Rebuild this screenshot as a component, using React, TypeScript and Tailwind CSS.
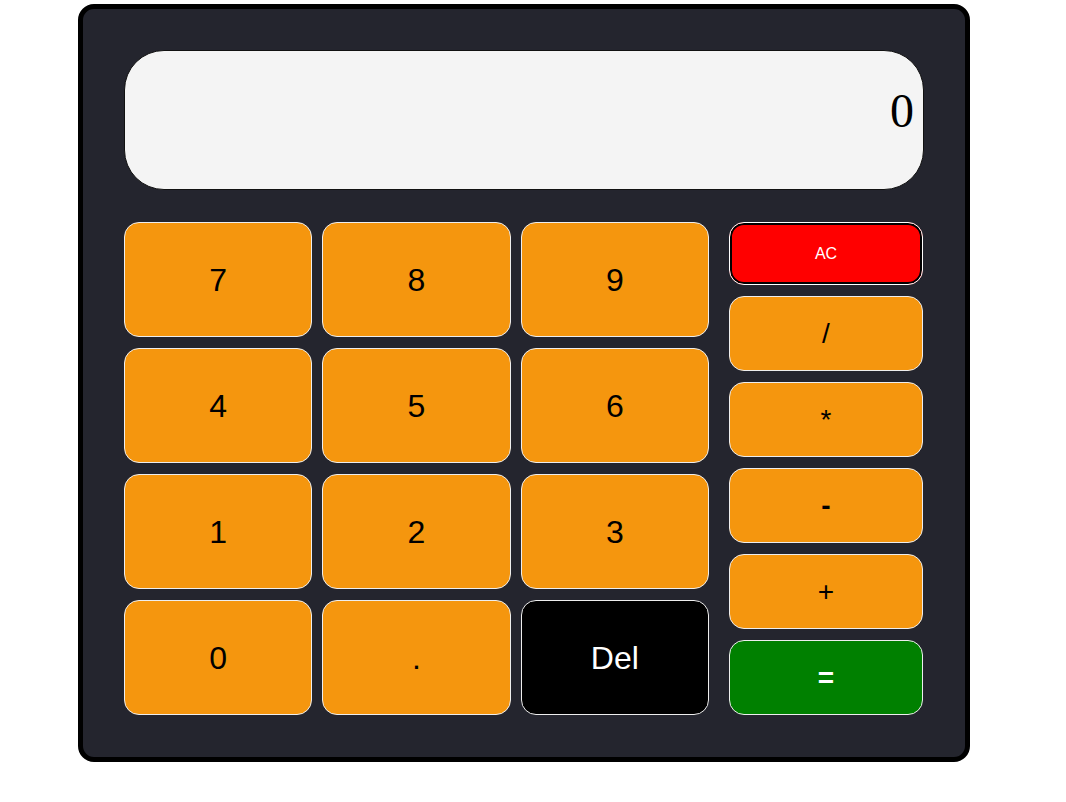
import React from "react";

const digitKeys = ["7", "8", "9", "4", "5", "6", "1", "2", "3", "0", "."];
const opKeys = ["/", "*", "-", "+"];

export default function App() {
  return (
    <div className="min-h-screen bg-white pt-[4px] pl-[78px] font-['Liberation_Sans',Arial,sans-serif]">
      <div className="w-[892px] rounded-[16px] border-[5px] border-black bg-[#24252e] px-[41px] pt-[41px] pb-[42px]">
        <div className="h-[140px] rounded-[40px] border border-[#111] bg-[#f4f4f4] pr-[9px] pt-[32px] text-right font-['Liberation_Serif','Times_New_Roman',serif] text-[48px] leading-[1.15] text-black">
          0
        </div>

        <div className="mt-[32px] flex gap-[20px]">
          <div className="grid w-[585px] grid-cols-3 gap-x-[10px] gap-y-[11px]">
            {digitKeys.map((key) => (
              <button
                key={key}
                className="flex h-[115px] items-center justify-center rounded-[15px] border border-[#eee] bg-[#f5960e] text-[32px] text-black"
              >
                {key}
              </button>
            ))}
            <button className="flex h-[115px] items-center justify-center rounded-[15px] border border-[#eee] bg-black text-[32px] text-white">
              Del
            </button>
          </div>

          <div className="flex w-[194px] flex-col gap-[11px]">
            <button className="flex h-[63px] items-center justify-center rounded-[15px] border border-white bg-[#ff0000] text-[16px] text-white shadow-[inset_0_0_0_2px_black]">
              AC
            </button>
            {opKeys.map((key) => (
              <button
                key={key}
                className={`flex h-[75px] items-center justify-center rounded-[15px] border border-[#eee] bg-[#f5960e] text-[28px] text-black ${key === "-" ? "font-bold" : ""}`}
              >
                {key}
              </button>
            ))}
            <button className="flex h-[75px] items-center justify-center rounded-[15px] border border-[#eee] bg-[#008000] text-[28px] font-bold text-white">
              =
            </button>
          </div>
        </div>
      </div>
    </div>
  );
}
